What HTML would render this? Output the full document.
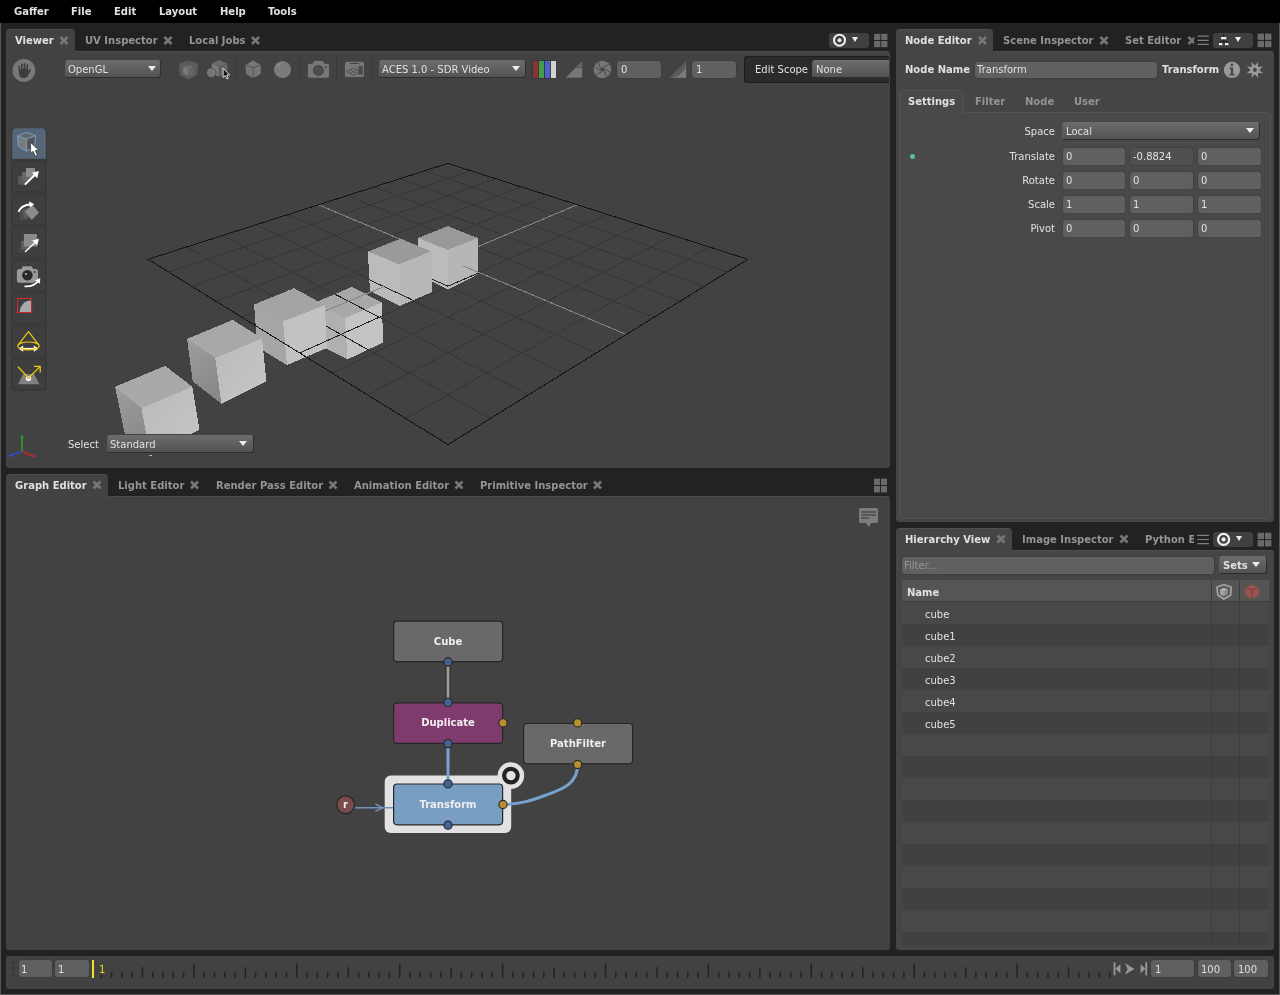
<!DOCTYPE html>
<html>
<head>
<meta charset="utf-8">
<title>Gaffer</title>
<style>
html,body{margin:0;padding:0;}
body{width:1280px;height:995px;overflow:hidden;background:#222;position:relative;
 font-family:"DejaVu Sans","Liberation Sans",sans-serif;font-size:10px;color:#e0e0e0;}
.a{position:absolute;box-sizing:border-box;}
.t{position:absolute;white-space:nowrap;line-height:12px;height:12px;will-change:transform;}
.b{font-weight:bold;}
.f{color:#949494;}
.menubar{left:0;top:0;width:1280px;height:23px;background:#000;}
.panel{background:#424242;border-top:1px solid #4c4c4c;border-radius:0 3px 3px 3px;}
.tab{background:#424242;border-radius:4px 4px 0 0;border-top:1px solid #4c4c4c;}
.inp{background:#606060;border-radius:3px;box-shadow:0 0 0 .6px rgba(40,40,40,.35);}
.dd{border-radius:3px;border:1px solid #2e2e2e;border-top-color:#6c6c6c;border-left-color:#5c5c5c;background:linear-gradient(#6c6c6c,#525252);}
.arr{width:0;height:0;border-left:4px solid transparent;border-right:4px solid transparent;border-top:5.7px solid #ececec;}
.tb{left:12px;width:34px;height:31px;background:#3e3e3e;border:1px solid #383838;}
.nl{width:110px;text-align:center;color:#eee}
svg{position:absolute;overflow:visible;}
</style>
</head>
<body>
<!-- MENUBAR -->
<div class="a menubar"></div>
<div class="t b" style="left:14px;top:6px">Gaffer</div>
<div class="t b" style="left:71px;top:6px">File</div>
<div class="t b" style="left:114px;top:6px">Edit</div>
<div class="t b" style="left:159px;top:6px">Layout</div>
<div class="t b" style="left:220px;top:6px">Help</div>
<div class="t b" style="left:268px;top:6px">Tools</div>
<div class="a" style="left:0;top:23px;width:1280px;height:972px;border:1px solid #565656;border-top:none"></div>

<!-- VIEWER -->
<div id="viewer">
<div class="a panel" style="left:6px;top:51px;width:884px;height:417px"></div>
<div class="a tab" style="left:6px;top:29px;width:69px;height:23px"></div>
<svg id="scene" width="1280" height="995" style="left:0;top:0" shape-rendering="crispEdges"><defs><linearGradient id="gl" x1="0" y1="0" x2="0.3" y2="1"><stop offset="0" stop-color="#9e9e9e"/><stop offset="1" stop-color="#888"/></linearGradient><linearGradient id="gr" x1="0" y1="0" x2="1" y2="1"><stop offset="0" stop-color="#bababa"/><stop offset="1" stop-color="#c6c6c6"/></linearGradient></defs>
<polygon points="351.9,286.9 315.0,302.5 345.0,318.1 381.9,302.5" fill="#a8a8a8"/><polygon points="315.0,302.5 317.0,344.0 347.5,359.4 345.0,318.1" fill="#b0b0b0"/><polygon points="345.0,318.1 347.5,359.4 383.1,342.5 381.9,302.5" fill="#c4c4c4"/>
<path d="M186.4 247.1L490.0 418.7M169.2 272.3L471.1 170.9M222.3 235.5L528.4 394.9M191.8 286.3L495.6 178.7M256.2 224.7L563.7 373.1M215.9 301.2L521.4 186.9M288.2 214.5L596.2 353.0M241.8 317.2L548.6 195.6M347.1 195.6L654.1 317.2M299.7 353.0L607.5 214.4M374.2 186.9L680.0 301.2M332.2 373.1L639.5 224.7M400.0 178.7L704.2 286.3M367.5 394.9L673.5 235.5M424.5 170.9L726.8 272.4M406.0 418.6L709.6 247.0" stroke="#363636" stroke-width="1" fill="none"/>
<clipPath id="cc"><polygon points="351.9,286.9 315,302.5 317,344 347.5,359.4 383.1,342.5 381.9,302.5"/></clipPath>
<path d="M186.4 247.1L490.0 418.7M169.2 272.3L471.1 170.9M222.3 235.5L528.4 394.9M191.8 286.3L495.6 178.7M256.2 224.7L563.7 373.1M215.9 301.2L521.4 186.9M288.2 214.5L596.2 353.0M241.8 317.2L548.6 195.6M347.1 195.6L654.1 317.2M299.7 353.0L607.5 214.4M374.2 186.9L680.0 301.2M332.2 373.1L639.5 224.7M400.0 178.7L704.2 286.3M367.5 394.9L673.5 235.5M424.5 170.9L726.8 272.4M406.0 418.6L709.6 247.0" stroke="#1c1c1c" stroke-width="1" fill="none" clip-path="url(#cc)"/>
<path d="M318.5 204.8L626.3 334.5M269.7 334.4L577.2 204.8" stroke="#858585" stroke-width="1" fill="none"/>
<polygon points="447.9,226.1 418.0,238.1 447.9,249.8 478.0,238.1" fill="#999999"/><polygon points="418.0,238.1 418.0,274.2 447.9,289.7 447.9,249.8" fill="#bbbbbb"/><polygon points="447.9,249.8 447.9,289.7 478.0,274.2 478.0,238.1" fill="#b6b6b6"/>
<polygon points="400.6,238.7 367.9,251.6 399.2,264.2 430.9,251.3" fill="#9a9a9a"/><polygon points="367.9,251.6 369.9,290.9 399.8,305.9 399.2,264.2" fill="#bbbbbb"/><polygon points="399.2,264.2 399.8,305.9 432.0,292.0 430.9,251.3" fill="#b7b7b7"/>
<polygon points="294.1,288.2 254.1,304.5 283.1,321.4 324.9,305.2" fill="#a4a4a4"/><polygon points="254.1,304.5 257.4,347.1 287.0,365.1 283.1,321.4" fill="#a6a6a6"/><polygon points="283.1,321.4 287.0,365.1 326.8,348.0 324.9,305.2" fill="#c2c2c2"/>
<path d="M299.7 353.0L327.0 340.7M432.0 279.2L447.9 286.2M447.9 286.2L477.8 273.3M369.3 279.8L412.1 299.7" stroke="#222" stroke-width="1" fill="none"/>
<path d="M367.6 293.5L384.0 286.6M463.1 265.9L478.0 272.2" stroke="#858585" stroke-width="1" fill="none"/>
<polygon points="148.1,259.3 447.8,163.4 747.9,259.3 448.0,444.6" fill="none" stroke="#141414" stroke-width="1"/>
<polygon points="232.7,319.9 187.1,338.9 215.3,358.0 262.1,338.4" fill="#a8a8a8"/><polygon points="187.1,338.9 192.7,381.4 221.4,403.7 215.3,358.0" fill="url(#gl)"/><polygon points="215.3,358.0 221.4,403.7 266.3,381.4 262.1,338.4" fill="url(#gr)"/>
<polygon points="165.1,365.9 115.1,386.7 141.5,408.2 192.3,386.7" fill="#a9a9a9"/><polygon points="115.1,386.7 124.9,434.2 150.3,456.3 141.5,408.2" fill="url(#gl)"/><polygon points="141.5,408.2 150.3,456.3 199.5,429.7 192.3,386.7" fill="url(#gr)"/>
</svg>
<div class="t b" style="left:15px;top:35px">Viewer</div>
<div class="t b f" style="left:85px;top:35px">UV Inspector</div>
<div class="t b f" style="left:189px;top:35px">Local Jobs</div>
<!-- pinning dropdown + layout icon -->
<div class="a" style="left:829px;top:32.5px;width:40px;height:15.5px;background:#404040;border-radius:3px"></div>
<div class="a arr" style="left:851.7px;top:37.2px;border-left-width:3.3px;border-right-width:3.3px;border-top-width:5.2px"></div>
<!-- toolbar -->
<div class="a dd" style="left:65px;top:60px;width:96px;height:18px"></div>
<div class="t" style="left:68px;top:64px">OpenGL</div>
<div class="a arr" style="left:148px;top:66px"></div>
<div class="a dd" style="left:379px;top:60px;width:147px;height:18px"></div>
<div class="t" style="left:382px;top:64px">ACES 1.0 - SDR Video</div>
<div class="a arr" style="left:512px;top:66px"></div>
<div class="a inp" style="left:617px;top:61px;width:44px;height:17px"></div>
<div class="t" style="left:621px;top:64px">0</div>
<div class="a inp" style="left:692px;top:61px;width:44px;height:17px"></div>
<div class="t" style="left:696px;top:64px">1</div>
<div class="a" style="left:744px;top:56px;width:145px;height:27px;background:#2b2b2b;border-radius:3px 0 0 3px;border:1px solid #1e1e1e;border-right:none"></div>
<div class="t" style="left:755px;top:64px">Edit Scope</div>
<div class="a dd" style="left:812px;top:60px;width:82px;height:18px;clip-path:inset(0 5px 0 0)"></div>
<div class="t" style="left:816px;top:64px">None</div>
<!-- tool buttons -->
<div class="a" style="left:11px;top:128px;width:36px;height:263px;background:#3a3a3a;border-radius:4px"></div>
<div class="a tb" style="top:128px;background:#566577;border-color:#4f5d6d;border-radius:4px 4px 0 0"></div>
<div class="a tb" style="top:161px"></div>
<div class="a tb" style="top:194px"></div>
<div class="a tb" style="top:227px"></div>
<div class="a tb" style="top:260px"></div>
<div class="a tb" style="top:293px"></div>
<div class="a tb" style="top:326px"></div>
<div class="a tb" style="top:359px;border-radius:0 0 4px 4px"></div>
<svg id="icons" width="1280" height="995" style="left:0;top:0">
<!-- hand -->
<circle cx="23.9" cy="70.4" r="11.4" fill="#787878"/>
<path d="M18.3 66.2 Q18.3 65.2 19 65.2 Q19.7 65.2 19.7 66.2 L19.9 69.3 L21 69.3 L21 64.6 Q21 63.6 21.8 63.6 Q22.6 63.6 22.6 64.6 L22.6 68.8 L23.7 68.8 L23.7 64.1 Q23.7 63.1 24.5 63.1 Q25.3 63.1 25.3 64.1 L25.3 68.8 L26.4 68.8 L26.4 65.1 Q26.4 64.1 27.2 64.1 Q28 64.1 28 65.1 L28 71 L29.4 69.4 Q30.2 68.7 30.8 69.4 Q31.2 70 30.6 70.8 L27.8 76 Q26.8 78 24.5 78 L23 78 Q19.8 78 19.2 74.5 Z" fill="#3c3c3c"/>
<!-- icon1: room + cube -->
<polygon points="188.4,60.6 179,63.8 179.8,75.1 188.4,79.4 197.3,75.1 198.1,63.8" fill="#5c5c5c"/>
<path d="M188.4 60.6V69.2M179 63.8M188.4 69.2" stroke="#4a4a4a" stroke-width=".8" fill="none"/>
<polygon points="188.4,64.9 182.9,67.3 188.4,69.4 193.8,67.3" fill="#6e6e6e"/>
<polygon points="182.9,67.3 183.3,73.5 188.4,75.9 188.4,69.4" fill="#7c7c7c"/>
<polygon points="193.8,67.3 193.4,73.5 188.4,75.9 188.4,69.4" fill="#676767"/>
<!-- icon2: sphere + cube + cursor -->
<polygon points="219.2,60.2 211.8,63.4 219.2,66.5 227.4,63.4" fill="#6a6a6a"/>
<polygon points="211.8,63.4 211.8,73.5 219.2,76.7 219.2,66.5" fill="#7b7b7b"/>
<polygon points="227.4,63.4 227.4,73.5 219.2,76.7 219.2,66.5" fill="#666"/>
<path d="M219.2 66.5V76.7" stroke="#4c4c4c" stroke-width=".8"/>
<circle cx="211.4" cy="72.8" r="5.1" fill="#424242"/>
<circle cx="211.4" cy="72.8" r="4.5" fill="#777"/>
<path d="M223.1 68.2V77.6L225.3 75.6L226.8 79L228.3 78.3L226.8 75L229.6 75Z" fill="#111" stroke="#eee" stroke-width=".9" stroke-linejoin="round"/>
<!-- dividers -->
<path d="M235.5 56V83M300.5 56V83M336.5 56V83M372.5 56V83" stroke="#383838" stroke-width="1"/>
<!-- icon3 cube -->
<polygon points="253.2,60.6 245.4,64.9 246.2,73.9 253.2,78.2 260.6,73.9 261,64.9" fill="#777"/>
<path d="M245.4 64.9L253.2 67.6L261 64.9M253.2 67.6V78.2" stroke="#505050" stroke-width="1" fill="none"/>
<!-- icon4 sphere -->
<circle cx="282.5" cy="69.5" r="8.6" fill="#7a7a7a"/>
<path d="M276.3 67.6Q277.6 63.6 282.2 62.9Q278.6 64.8 276.3 67.6Z" fill="#a0a0a0"/>
<!-- camera -->
<path d="M309.9 63.8H312.6L314.2 61H322.8L324.4 63.8H327Q329 63.8 329 65.8V75.8Q329 77.8 327 77.8H309.9Q307.9 77.8 307.9 75.8V65.8Q307.9 63.8 309.9 63.8Z" fill="#777"/>
<circle cx="318.4" cy="70.4" r="5.4" fill="#444"/>
<circle cx="318.4" cy="70.4" r="4.4" fill="#4c4c4c"/>
<circle cx="316.6" cy="68.6" r=".7" fill="#777"/>
<circle cx="325.9" cy="66.9" r="1" fill="#444"/>
<!-- panel icon -->
<rect x="345" y="61.8" width="19" height="15.3" rx="1.6" fill="#777"/>
<path d="M350 63.5H359" stroke="#444" stroke-width="1"/>
<rect x="358.5" y="66.1" width="4.3" height="8.4" fill="#4a4a4a"/>
<path d="M346.4 71.6L353.6 67.9L358.4 70.2V73.2L353.6 75.5ZM350 69.8L357 73.6M350 73.4L357 69.6" stroke="#4a4a4a" stroke-width=".8" fill="none"/>
<!-- rgb -->
<rect x="532" y="60" width="25" height="19" fill="#333"/>
<rect x="532.9" y="60.9" width="5.2" height="17.2" fill="#863532"/>
<rect x="538.9" y="60.9" width="5.1" height="17.2" fill="#469a4b"/>
<rect x="544.9" y="60.9" width="5.1" height="17.2" fill="#4c62c8"/>
<rect x="550.9" y="60.9" width="5.2" height="17.2" fill="#d2d2d2"/>
<!-- exposure triangle -->
<polygon points="565.8,77.8 582.1,77.8 582.1,61.2" fill="#777"/>
<polygon points="576.2,67.3 582.1,67.3 582.1,61.2" fill="#666"/>
<path d="M575.8 67.5H582.1" stroke="#444" stroke-width=".7"/>
<!-- aperture -->
<circle cx="602.4" cy="69.5" r="8.8" fill="#777"/>
<g stroke="#444" stroke-width=".9" fill="none">
<path d="M602.4 69.5m-1.8 -1.1L598.2 61.8M602.4 69.5m0.1 -2.1L609.4 64.2M602.4 69.5m1.9 -1L610.6 72.6M602.4 69.5m1.8 1.1L606.6 77.2M602.4 69.5m-0.1 2.1L595.4 74.8M602.4 69.5m-1.9 1L594.2 66.4"/>
</g>
<circle cx="602.4" cy="69.5" r="1.9" fill="#444"/>
<!-- gamma -->
<polygon points="669.3,77.8 686.1,77.8 686.1,61" fill="#5a5a5a"/>
<path d="M670.5 77.8Q685 76 686.1 62.5V77.8Z" fill="#7a7a7a"/>
<!-- pin (focus) icon top right -->
<circle cx="839.5" cy="40.2" r="5.5" fill="none" stroke="#ececec" stroke-width="2.1"/>
<circle cx="839.5" cy="40.2" r="2" fill="#ececec"/>
<!-- layout grid icons -->
<g fill="#6a6a6a">
<rect x="874.1" y="33.8" width="6.2" height="6.2"/><rect x="881.2" y="33.8" width="6.2" height="6.2"/><rect x="874.1" y="41" width="6.2" height="6.2"/><rect x="881.2" y="41" width="6.2" height="6.2"/>
</g>
<!-- tab close x's -->
<g stroke="#777" stroke-width="2.6">
<path d="M60.5 37L67.5 44M67.5 37L60.5 44"/>
<path d="M164.5 37L171.5 44M171.5 37L164.5 44"/>
<path d="M252 37L259 44M259 37L252 44"/>
</g>
<!-- TOOL ICONS -->
<!-- 1 select -->
<polygon points="26.4,132.4 17.6,136 26.4,139.1 35.5,135.6" fill="#666"/>
<polygon points="17.6,136 18.3,146.2 26.4,151.1 26.4,139.1" fill="#7a7a7a"/>
<polygon points="35.5,135.6 34.8,146.5 26.4,151.1 26.4,139.1" fill="#555"/>
<path d="M26.4 132.4L17.6 136L18.3 146.2L26.4 151.1L34.8 146.5L35.5 135.6ZM17.6 136L26.4 139.1L35.5 135.6M26.4 139.1V151.1" stroke="#77a6d0" stroke-width=".9" fill="none" stroke-linejoin="round"/>
<path d="M30.6 142.4V153.7L33.1 151.3L35.2 156.2L37.4 155.1L35.3 150.4H38.9Z" fill="#fff" stroke="#3a3a3a" stroke-width=".8" stroke-linejoin="round"/>
<!-- 2 translate -->
<rect x="18" y="176" width="8.8" height="8.8" fill="#575757"/>
<rect x="22" y="172" width="8.8" height="8.8" fill="#686868"/>
<rect x="26" y="168" width="9" height="8.8" fill="#8c8c8c"/>
<path d="M24.8 184.6L35.5 174.2" stroke="#fff" stroke-width="2"/>
<polygon points="38.9,170.9 37.2,178.2 32,172.8" fill="#fff"/>
<!-- 3 rotate -->
<polygon points="20,211.5 28,211.5 28,219.9 20,219.9" fill="#4c4c4c"/>
<polygon points="22.2,209.5 29.5,207.5 31.7,216 24.4,218.2" fill="#5c5c5c"/>
<polygon points="32.4,205.1 39,212.5 31.7,219.9 25,211.8" fill="#8c8c8c"/>
<path d="M18.9 211.2Q21.5 205.6 29.6 204.6" stroke="#fff" stroke-width="2" fill="none" stroke-linecap="round"/>
<polygon points="29,201.2 34.2,204.3 29.8,207.4" fill="#fff"/>
<!-- 4 scale -->
<path d="M19.3 248V251.7H23" stroke="#555" stroke-width=".8" fill="none"/>
<rect x="21.1" y="241" width="8.8" height="8.8" fill="#606060"/>
<rect x="23.9" y="234" width="13" height="12.6" fill="#8c8c8c"/>
<path d="M25 252L35.5 242" stroke="#fff" stroke-width="1.3"/>
<polygon points="38.9,238.7 37.3,245.6 32.2,240.5" fill="#fff"/>
<!-- 5 camera -->
<path d="M19.4 269H21.4L23 266.2H31.6L33.2 269H35.5Q38 269 38 271.5V280.2Q38 282.7 35.5 282.7H19.4Q16.9 282.7 16.9 280.2V271.5Q16.9 269 19.4 269Z" fill="#9a9a9a"/>
<circle cx="27.4" cy="275.3" r="5.3" fill="#2a2a2a"/>
<rect x="25.2" y="273.2" width="1.6" height="1.6" fill="#ddd"/>
<circle cx="34.8" cy="272" r="1.1" fill="#444"/>
<path d="M25.2 286.4Q33.5 286.9 38.2 281" stroke="#3c3c3c" stroke-width="3.6" fill="none"/>
<path d="M25.2 286.4Q33.5 286.9 37.8 281.4" stroke="#fff" stroke-width="1.8" fill="none" stroke-linecap="round"/>
<polygon points="40.2,277.9 40,283.8 35,280.4" fill="#fff"/>
<!-- 6 crop -->
<path d="M31 311.9V300.6A11.3 11.3 0 0 0 19.7 311.9Z" fill="#a8a8a8"/>
<rect x="17.5" y="298.5" width="14.2" height="14.1" fill="none" stroke="#cc2b2b" stroke-width="1"/>
<!-- 7 cone -->
<path d="M19.9 348.7H37.1" stroke="#fff" stroke-width="1.6"/>
<polygon points="18.6,348.7 23.2,345.6 23.2,351.8" fill="#fff"/>
<polygon points="38.4,348.7 33.8,345.6 33.8,351.8" fill="#fff"/>
<g stroke="#f0c814" stroke-width="1.2" fill="none" stroke-linejoin="round">
<ellipse cx="28.5" cy="345.9" rx="10.7" ry="3.9"/>
<path d="M18.6 344.4L28.5 331.7L38.4 344.4"/>
</g>
<!-- 8 light -->
<polygon points="23.2,374 34.1,374 39.4,384.2 18,384.2" fill="#808080"/>
<circle cx="28.5" cy="378.6" r="2.7" fill="#f4f4f4"/>
<circle cx="28.5" cy="378" r="1.3" fill="#bbb"/>
<g stroke="#f0c814" stroke-width="1.3" fill="none">
<path d="M18 366.7L28.5 377.9L40 366.6M34.1 366.4H40.2V372.6"/>
</g>
<!-- axis gizmo -->
<path d="M22 451.5V437" stroke="#2ea02e" stroke-width="1.6"/>
<polygon points="22,434.2 20.3,438 23.7,438" fill="#2ea02e"/>
<path d="M22 451.5L10.5 455.3" stroke="#2a50c8" stroke-width="1.8"/>
<polygon points="7.8,456.3 11.4,453.5 12,457" fill="#2a50c8"/>
<path d="M22 451.5L33 456" stroke="#c02828" stroke-width="1.8"/>
<polygon points="35.6,457.2 31.8,457.2 33,454" fill="#c02828"/>
</svg>

<!-- select -->
<div class="a" style="left:60px;top:434px;width:198px;height:20.5px;background:#424242"></div>
<div class="t" style="left:68px;top:439px">Select</div>
<div class="a dd" style="left:107px;top:435px;width:147px;height:18px"></div>
<div class="t" style="left:110px;top:439px">Standard</div>
<div class="a arr" style="left:239px;top:441px"></div>
</div>

<!-- GRAPH EDITOR -->
<div id="graph">
<div class="a panel" style="left:6px;top:496px;width:884px;height:454px"></div>
<div class="a tab" style="left:6px;top:474px;width:102px;height:23px"></div>
<div class="t b" style="left:15px;top:480px">Graph Editor</div>
<div class="t b f" style="left:118px;top:480px">Light Editor</div>
<div class="t b f" style="left:216px;top:480px">Render Pass Editor</div>
<div class="t b f" style="left:354px;top:480px">Animation Editor</div>
<div class="t b f" style="left:480px;top:480px">Primitive Inspector</div>
<svg id="graphsvg" width="1280" height="995" style="left:0;top:0">
<!-- grid icon & annotation icon -->
<g fill="#6a6a6a">
<rect x="874" y="478.6" width="6" height="6.4"/><rect x="881" y="478.6" width="6" height="6.4"/><rect x="874" y="486" width="6" height="6.4"/><rect x="881" y="486" width="6" height="6.4"/>
</g>
<path d="M861 508H876Q878 508 878 510V521Q878 523 876 523H871.3L868.6 527L865.9 523H861Q859 523 859 521V510Q859 508 861 508Z" fill="#7c7c7c"/>
<path d="M861.3 511.9H876M861.3 515H876M861.3 518.1H869" stroke="#4a4a4a" stroke-width="1.5"/>
<!-- connections -->
<path d="M448 662V703" stroke="#2c2c2c" stroke-width="4.8"/>
<path d="M448 662V703" stroke="#9a9a9a" stroke-width="2.8"/>
<!-- highlight -->
<rect x="384.7" y="775.6" width="126.5" height="57.5" rx="6" fill="#e2e2e2"/>
<circle cx="510.9" cy="775.6" r="13.3" fill="#e2e2e2"/>
<circle cx="510.9" cy="775.6" r="6.8" fill="none" stroke="#222" stroke-width="4.2"/>
<path d="M355 807.7H393" stroke="#6f93bb" stroke-width="1.4"/>
<path d="M375.3 804L383 807.7L375.3 811.4" stroke="#6f93bb" stroke-width="1.4" fill="none"/>
<path d="M448 744V784" stroke="#79a3cf" stroke-width="3"/>
<path d="M503 804.5C520 804.5 533 800 546.25 795S577.6 785 577.6 765" stroke="#79a3cf" stroke-width="3" fill="none"/>
<!-- nodes -->
<g stroke="#262626" stroke-width="1.2">
<rect x="393.6" y="621.2" width="109" height="40.4" rx="3.5" fill="#696969"/>
<rect x="393.6" y="702.8" width="109" height="40.5" rx="3.5" fill="#7f3b6e"/>
<rect x="523.6" y="723.5" width="109" height="40.3" rx="3.5" fill="#696969"/>
<rect x="393.6" y="784" width="109" height="40.8" rx="3.5" fill="#789ec3"/>
<circle cx="345.6" cy="804.8" r="8.9" fill="#7a4c4c"/>
</g>
<g stroke="#262626" stroke-width="1.1">
<g fill="#426394">
<circle cx="448" cy="662" r="4.1"/>
<circle cx="448" cy="702.4" r="4.1"/>
<circle cx="448" cy="743.6" r="4.1"/>
<circle cx="448" cy="783.9" r="4.1"/>
<circle cx="448" cy="825.2" r="4.1"/>
</g>
<g fill="#b8902f">
<circle cx="503" cy="722.9" r="4.1"/>
<circle cx="577.6" cy="722.9" r="4.1"/>
<circle cx="577.6" cy="764.5" r="4.1"/>
<circle cx="503" cy="804.5" r="4.1"/>
</g>
</g>
<!-- tab close x's -->
<g stroke="#777" stroke-width="2.6">
<path d="M93.5 481.5L100.5 488.5M100.5 481.5L93.5 488.5"/>
<path d="M191 481.5L198 488.5M198 481.5L191 488.5"/>
<path d="M329.5 481.5L336.5 488.5M336.5 481.5L329.5 488.5"/>
<path d="M455.5 481.5L462.5 488.5M462.5 481.5L455.5 488.5"/>
<path d="M594 481.5L601 488.5M601 481.5L594 488.5"/>
</g>
</svg>

<div class="t b nl" style="left:393px;top:636px">Cube</div>
<div class="t b nl" style="left:393px;top:717px">Duplicate</div>
<div class="t b nl" style="left:523px;top:738px">PathFilter</div>
<div class="t b nl" style="left:393px;top:799px">Transform</div>
<div class="t b" style="left:336px;top:799px;width:19px;text-align:center;color:#eee">r</div>
</div>

<!-- NODE EDITOR -->
<div id="nodeeditor">
<div class="a panel" style="left:896px;top:51px;width:378px;height:471px;background:#454545;border-color:#4f4f4f"></div>
<div class="a tab" style="left:896px;top:29px;width:97px;height:23px;background:#454545;border-color:#4f4f4f"></div>
<div class="t b" style="left:905px;top:35px">Node Editor</div>
<div class="t b f" style="left:1003px;top:35px">Scene Inspector</div>
<div class="a" style="left:1125px;top:30px;width:69px;height:20px;overflow:hidden"><div class="t b f" style="left:0;top:5px">Set Editor</div></div>
<div class="a" style="left:1213px;top:33px;width:40px;height:15px;background:#404040;border-radius:3px"></div>
<div class="a arr" style="left:1235px;top:37px;border-left-width:3.5px;border-right-width:3.5px;border-top-width:5.5px"></div>
<div class="t b" style="left:905px;top:64px">Node Name</div>
<div class="a inp" style="left:974.5px;top:61.5px;width:182.5px;height:16.5px"></div>
<div class="t" style="left:977px;top:64px">Transform</div>
<div class="t b" style="left:1162px;top:64px">Transform</div>
<!-- inner tabs -->
<div class="a" style="left:899px;top:112px;width:372px;height:407px;border:1px solid #535353;border-radius:0 3px 3px 3px;background:#494949"></div>
<div class="a" style="left:899px;top:90px;width:65px;height:23px;border:1px solid #535353;border-bottom:none;border-radius:4px 4px 0 0;background:#494949"></div>
<div class="t b" style="left:908px;top:96px">Settings</div>
<div class="t b f" style="left:975px;top:96px">Filter</div>
<div class="t b f" style="left:1025px;top:96px">Node</div>
<div class="t b f" style="left:1074px;top:96px">User</div>
<div class="t" style="left:955px;top:126px;width:100px;text-align:right">Space</div>
<div class="a dd" style="left:1062px;top:122px;width:198px;height:18px"></div>
<div class="t" style="left:1066px;top:126px">Local</div>
<div class="a arr" style="left:1246px;top:128px"></div>
<div class="a" style="left:910px;top:153.5px;width:5.4px;height:5.4px;border-radius:3px;background:#5cc08c"></div>
<div class="t" style="left:955px;top:151.0px;width:100px;text-align:right">Translate</div>
<div class="a inp" style="left:1062.5px;top:147.5px;width:62.8px;height:17px"></div>
<div class="t" style="left:1065.5px;top:151.0px">0</div>
<div class="a inp" style="left:1130.4px;top:147.5px;width:63.0px;height:17px;background:#505050;border-color:#4a4a4a"></div>
<div class="t" style="left:1133.4px;top:151.0px">-0.8824</div>
<div class="a inp" style="left:1198.4px;top:147.5px;width:62.9px;height:17px"></div>
<div class="t" style="left:1201.4px;top:151.0px">0</div>
<div class="t" style="left:955px;top:175.0px;width:100px;text-align:right">Rotate</div>
<div class="a inp" style="left:1062.5px;top:171.5px;width:62.8px;height:17px"></div>
<div class="t" style="left:1065.5px;top:175.0px">0</div>
<div class="a inp" style="left:1130.4px;top:171.5px;width:63.0px;height:17px"></div>
<div class="t" style="left:1133.4px;top:175.0px">0</div>
<div class="a inp" style="left:1198.4px;top:171.5px;width:62.9px;height:17px"></div>
<div class="t" style="left:1201.4px;top:175.0px">0</div>
<div class="t" style="left:955px;top:199.0px;width:100px;text-align:right">Scale</div>
<div class="a inp" style="left:1062.5px;top:195.5px;width:62.8px;height:17px"></div>
<div class="t" style="left:1065.5px;top:199.0px">1</div>
<div class="a inp" style="left:1130.4px;top:195.5px;width:63.0px;height:17px"></div>
<div class="t" style="left:1133.4px;top:199.0px">1</div>
<div class="a inp" style="left:1198.4px;top:195.5px;width:62.9px;height:17px"></div>
<div class="t" style="left:1201.4px;top:199.0px">1</div>
<div class="t" style="left:955px;top:223.0px;width:100px;text-align:right">Pivot</div>
<div class="a inp" style="left:1062.5px;top:219.5px;width:62.8px;height:17px"></div>
<div class="t" style="left:1065.5px;top:223.0px">0</div>
<div class="a inp" style="left:1130.4px;top:219.5px;width:63.0px;height:17px"></div>
<div class="t" style="left:1133.4px;top:223.0px">0</div>
<div class="a inp" style="left:1198.4px;top:219.5px;width:62.9px;height:17px"></div>
<div class="t" style="left:1201.4px;top:223.0px">0</div>
</div>

<!-- HIERARCHY -->
<div id="hier">
<div class="a panel" style="left:896px;top:550px;width:378px;height:400px;background:#454545;border-color:#4f4f4f"></div>
<div class="a tab" style="left:896px;top:528px;width:116px;height:23px;background:#454545;border-color:#4f4f4f"></div>
<div class="t b" style="left:905px;top:534px">Hierarchy View</div>
<div class="t b f" style="left:1022px;top:534px">Image Inspector</div>
<div class="a" style="left:1145px;top:529px;width:49px;height:20px;overflow:hidden"><div class="t b f" style="left:0;top:5px">Python Editor</div></div>
<div class="a" style="left:1213px;top:532px;width:40px;height:15px;background:#404040;border-radius:3px"></div>
<div class="a arr" style="left:1236px;top:536px;border-left-width:3.5px;border-right-width:3.5px;border-top-width:5.5px"></div>
<div class="a inp" style="left:901.5px;top:556.5px;width:312px;height:17px"></div>
<div class="t f" style="left:904px;top:560px">Filter...</div>
<div class="a dd" style="left:1219px;top:556px;width:48px;height:18px"></div>
<div class="t b" style="left:1222.5px;top:560px">Sets</div>
<div class="a arr" style="left:1252.3px;top:562px"></div>
<div class="a" style="left:901.5px;top:580px;width:367px;height:365px;background:#484848;overflow:hidden">
<div class="a" style="left:0;top:22.3px;width:367px;height:22px;background:#484848"></div>
<div class="a" style="left:0;top:44.3px;width:367px;height:22px;background:#414141"></div>
<div class="a" style="left:0;top:66.3px;width:367px;height:22px;background:#484848"></div>
<div class="a" style="left:0;top:88.3px;width:367px;height:22px;background:#414141"></div>
<div class="a" style="left:0;top:110.3px;width:367px;height:22px;background:#484848"></div>
<div class="a" style="left:0;top:132.3px;width:367px;height:22px;background:#414141"></div>
<div class="a" style="left:0;top:154.3px;width:367px;height:22px;background:#484848"></div>
<div class="a" style="left:0;top:176.3px;width:367px;height:22px;background:#414141"></div>
<div class="a" style="left:0;top:198.3px;width:367px;height:22px;background:#484848"></div>
<div class="a" style="left:0;top:220.3px;width:367px;height:22px;background:#414141"></div>
<div class="a" style="left:0;top:242.3px;width:367px;height:22px;background:#484848"></div>
<div class="a" style="left:0;top:264.3px;width:367px;height:22px;background:#414141"></div>
<div class="a" style="left:0;top:286.3px;width:367px;height:22px;background:#484848"></div>
<div class="a" style="left:0;top:308.3px;width:367px;height:22px;background:#414141"></div>
<div class="a" style="left:0;top:330.3px;width:367px;height:22px;background:#484848"></div>
<div class="a" style="left:0;top:352.3px;width:367px;height:22px;background:#414141"></div>
<div class="a" style="left:0;top:0;width:367px;height:22.3px;background:#555;border-bottom:1px solid #3a3a3a"></div>
<div class="a" style="left:309.5px;top:0;width:1px;height:365px;background:#3c3c3c"></div>
<div class="a" style="left:337.5px;top:0;width:1px;height:365px;background:#3c3c3c"></div>
</div>
<div class="t b" style="left:906.5px;top:587px">Name</div>
<div class="t" style="left:925px;top:609px">cube</div>
<div class="t" style="left:925px;top:631px">cube1</div>
<div class="t" style="left:925px;top:653px">cube2</div>
<div class="t" style="left:925px;top:675px">cube3</div>
<div class="t" style="left:925px;top:697px">cube4</div>
<div class="t" style="left:925px;top:719px">cube5</div>
</div>

<svg id="rightsvg" width="1280" height="995" style="left:0;top:0">
<defs><clipPath id="cs"><rect x="1180" y="30" width="14.2" height="20"/></clipPath></defs>
<g stroke="#777" stroke-width="2.6">
<path d="M979 37L986 44M986 37L979 44"/>
<path d="M1100.5 37L1107.5 44M1107.5 37L1100.5 44"/>
<path d="M1188.5 37L1195.5 44M1195.5 37L1188.5 44" clip-path="url(#cs)"/>
<path d="M997.5 535.5L1004.5 542.5M1004.5 535.5L997.5 542.5"/>
<path d="M1120.5 535.5L1127.5 542.5M1127.5 535.5L1120.5 542.5"/>
</g>
<!-- hamburgers -->
<path d="M1197.5 36.2H1208.7M1197.5 40.3H1208.7M1197.5 44.4H1208.7M1197.3 535.3H1209M1197.3 539.5H1209M1197.3 543.6H1209" stroke="#808080" stroke-width="1.2"/>
<!-- node-tree icon -->
<path d="M1223.6 34V43M1220.6 44V41.3H1226.7V44" stroke="#222" stroke-width="1" fill="none"/>
<rect x="1221" y="37" width="5.3" height="2.3" fill="#f0f0f0"/>
<rect x="1219" y="43" width="3.3" height="2.3" fill="#f0f0f0"/>
<rect x="1225" y="43" width="3.4" height="2.3" fill="#f0f0f0"/>
<path d="M1220.6 45.3V46.6M1226.7 45.3V46.6" stroke="#222" stroke-width="1"/>
<!-- grid icons -->
<g fill="#6a6a6a">
<rect x="1257.6" y="33.6" width="6.4" height="6.3"/><rect x="1265" y="33.6" width="6.4" height="6.3"/><rect x="1257.6" y="40.9" width="6.4" height="6.3"/><rect x="1265" y="40.9" width="6.4" height="6.3"/>
<rect x="1257.6" y="532.8" width="6.4" height="6.3"/><rect x="1265" y="532.8" width="6.4" height="6.3"/><rect x="1257.6" y="540.1" width="6.4" height="6.3"/><rect x="1265" y="540.1" width="6.4" height="6.3"/>
</g>
<!-- hier pin icon -->
<circle cx="1223.6" cy="539.4" r="5.5" fill="none" stroke="#f0f0f0" stroke-width="2.2"/>
<circle cx="1223.6" cy="539.4" r="2.1" fill="#f0f0f0"/>
<!-- info icon -->
<circle cx="1232" cy="69.9" r="8.1" fill="#9a9a9a"/>
<circle cx="1231.9" cy="64.9" r="1.35" fill="#484848"/>
<path d="M1229.6 67.6H1233.2V74H1234.6V75.4H1229.4V74H1230.8V69H1229.6Z" fill="#484848"/>
<!-- gear icon -->
<g transform="translate(1254.9 69.9) rotate(22.5)" fill="#9a9a9a">
<circle r="4.6" />
<g id="sp"><polygon points="-1.7,-3.8 0,-8.8 1.7,-3.8"/><polygon points="-1.7,3.8 0,8.8 1.7,3.8"/><polygon points="-3.8,-1.7 -8.8,0 -3.8,1.7"/><polygon points="3.8,-1.7 8.8,0 3.8,1.7"/></g>
<g transform="rotate(45)"><polygon points="-1.7,-3.8 0,-8.8 1.7,-3.8"/><polygon points="-1.7,3.8 0,8.8 1.7,3.8"/><polygon points="-3.8,-1.7 -8.8,0 -3.8,1.7"/><polygon points="3.8,-1.7 8.8,0 3.8,1.7"/></g>
<circle r="2" fill="#484848"/>
</g>
<!-- header icons -->
<polygon points="1223.9,584.7 1216.8,587.2 1217.8,595.1 1223.9,599.2 1230.7,595.1 1231.2,587.2" fill="#5a5a5a" stroke="#b0b0b0" stroke-width="1.4" stroke-linejoin="round"/>
<polygon points="1223.9,588 1219.9,589.6 1223.9,591.2 1228,589.6" fill="#b8b8b8"/>
<polygon points="1219.9,589.6 1220.2,594.3 1223.9,596.3 1223.9,591.2" fill="#a8a8a8"/>
<polygon points="1228,589.6 1227.7,594.3 1223.9,596.3 1223.9,591.2" fill="#8e8e8e"/>
<polygon points="1252,584.7 1244.6,587.8 1245.2,595.1 1252,599 1258.9,595.1 1259.4,587.8" fill="#9c5250"/>
<path d="M1244.6 587.8L1252 589.6L1259.4 587.8M1252 589.6V599" stroke="#6e3c3b" stroke-width=".9" fill="none"/>
</svg>

<!-- TIMELINE -->
<div id="timeline">
<div class="a" style="left:6px;top:956px;width:1268px;height:33px;background:#424242;border-radius:2px"></div>
<div class="a inp" style="left:18.6px;top:960.3px;width:33.5px;height:17px"></div>
<div class="t" style="left:20.7px;top:964px">1</div>
<div class="a inp" style="left:55.3px;top:960.3px;width:33.7px;height:17px"></div>
<div class="t" style="left:57.7px;top:964px">1</div>
<div class="a" style="left:92px;top:960px;width:2px;height:18px;background:#f2de2a"></div>
<div class="t" style="left:99px;top:964px;color:#e8d428">1</div>
<div class="a inp" style="left:1151.3px;top:960.3px;width:43px;height:17px"></div>
<div class="t" style="left:1154.5px;top:964px">1</div>
<div class="a inp" style="left:1197.5px;top:960.3px;width:33.7px;height:17px"></div>
<div class="t" style="left:1200.5px;top:964px">100</div>
<div class="a inp" style="left:1234.3px;top:960.3px;width:33.7px;height:17px"></div>
<div class="t" style="left:1237.5px;top:964px">100</div>
<svg width="1280" height="995" style="left:0;top:0"><path d="M101.3 974.5V977.8M111.6 972.3V977.8M121.9 972.3V977.8M132.2 972.3V977.8M142.5 967.2V977.8M152.8 972.3V977.8M163.0 972.3V977.8M173.3 972.3V977.8M183.6 972.3V977.8M193.9 963.4V977.8M204.2 972.3V977.8M214.5 972.3V977.8M224.8 972.3V977.8M235.1 972.3V977.8M245.4 967.2V977.8M255.6 972.3V977.8M265.9 972.3V977.8M276.2 972.3V977.8M286.5 972.3V977.8M296.8 963.4V977.8M307.1 972.3V977.8M317.4 972.3V977.8M327.7 972.3V977.8M338.0 972.3V977.8M348.3 967.2V977.8M358.6 972.3V977.8M368.8 972.3V977.8M379.1 972.3V977.8M389.4 972.3V977.8M399.7 963.4V977.8M410.0 972.3V977.8M420.3 972.3V977.8M430.6 972.3V977.8M440.9 972.3V977.8M451.2 967.2V977.8M461.4 972.3V977.8M471.7 972.3V977.8M482.0 972.3V977.8M492.3 972.3V977.8M502.6 963.4V977.8M512.9 972.3V977.8M523.2 972.3V977.8M533.5 972.3V977.8M543.8 972.3V977.8M554.1 967.2V977.8M564.3 972.3V977.8M574.6 972.3V977.8M584.9 972.3V977.8M595.2 972.3V977.8M605.5 963.4V977.8M615.8 972.3V977.8M626.1 972.3V977.8M636.4 972.3V977.8M646.7 972.3V977.8M657.0 967.2V977.8M667.2 972.3V977.8M677.5 972.3V977.8M687.8 972.3V977.8M698.1 972.3V977.8M708.4 963.4V977.8M718.7 972.3V977.8M729.0 972.3V977.8M739.3 972.3V977.8M749.6 972.3V977.8M759.9 967.2V977.8M770.1 972.3V977.8M780.4 972.3V977.8M790.7 972.3V977.8M801.0 972.3V977.8M811.3 963.4V977.8M821.6 972.3V977.8M831.9 972.3V977.8M842.2 972.3V977.8M852.5 972.3V977.8M862.8 967.2V977.8M873.0 972.3V977.8M883.3 972.3V977.8M893.6 972.3V977.8M903.9 972.3V977.8M914.2 963.4V977.8M924.5 972.3V977.8M934.8 972.3V977.8M945.1 972.3V977.8M955.4 972.3V977.8M965.7 967.2V977.8M975.9 972.3V977.8M986.2 972.3V977.8M996.5 972.3V977.8M1006.8 972.3V977.8M1017.1 963.4V977.8M1027.4 972.3V977.8M1037.7 972.3V977.8M1048.0 972.3V977.8M1058.3 972.3V977.8M1068.6 967.2V977.8M1078.8 972.3V977.8M1089.1 972.3V977.8M1099.4 972.3V977.8M1109.7 972.3V977.8" stroke="#222" stroke-width="1.5"/>
<g fill="#3b3b3b"><circle cx="13.4" cy="962.8" r="2"/><circle cx="13.4" cy="968.8" r="2"/><circle cx="13.4" cy="974.7" r="2"/></g>
<g fill="#999"><rect x="1113.6" y="962.3" width="1.8" height="13"/><polygon points="1115.4,968.8 1120.4,964.3 1120.4,973.3"/>
<polygon points="1125,963.3 1134.5,968.9 1125,974.5 1127.6,968.9"/>
<rect x="1145.3" y="962.3" width="1.8" height="13"/><polygon points="1145.3,968.8 1140.6,964.3 1140.6,973.3"/></g></svg>
</div>
</body>
</html>
